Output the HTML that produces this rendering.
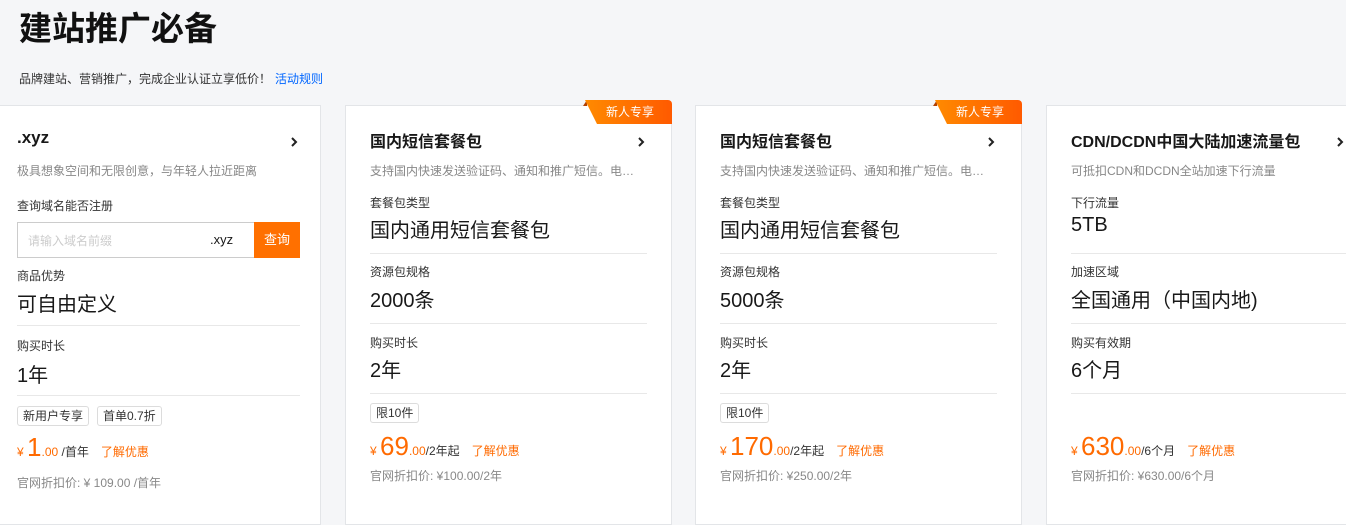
<!DOCTYPE html>
<html><head><meta charset="utf-8"><style>
*{margin:0;padding:0;box-sizing:border-box}
body{width:1346px;height:502px;overflow:hidden;background:#f5f6f8;font-family:"Liberation Sans","Noto Sans CJK SC",sans-serif;color:#181818;position:relative}
h1{position:absolute;left:19px;top:2px;font-size:33px;font-weight:700;color:#111}
.sub{position:absolute;left:19px;top:70px;font-size:12px;color:#333}
.sub a{color:#0066ff;text-decoration:none;margin-left:4px}
.card{position:absolute;top:105px;height:420px;background:#fff;border:1px solid #e3e5e8}
.in{position:absolute;left:24px;right:24px;top:0}
.t{position:absolute;top:22px;font-size:16px;font-weight:700;color:#181818}
.ar{position:absolute;right:2px;top:30px;width:8px;height:12px}
.d{position:absolute;top:56px;font-size:12px;color:#888;white-space:nowrap}
.lb{position:absolute;font-size:12px;color:#333}
.v{position:absolute;font-size:20px;color:#181818}
.hr{position:absolute;left:0;right:0;height:1px;background:#e8e8e8}
.tag{position:absolute;font-size:12px;border:1px solid #dcdcdc;border-radius:3px;padding:0 5px;height:20px;line-height:18px;color:#333}
.pr{position:absolute;color:#ff6a00;white-space:nowrap}
.pr .y{font-size:12px}.pr .n{font-size:26px}.pr .s{font-size:12px}.pr .u{font-size:12px;color:#333}.pr .k{font-size:12px;margin-left:12px}
.og{position:absolute;font-size:12px;color:#888}
.badge{position:absolute;top:-6px;right:-1px;width:87px;height:24px;background:linear-gradient(90deg,#ff8a00,#ff5a00);clip-path:polygon(0 0,100% 0,100% 100%,12px 100%);color:#fff;font-size:12px;line-height:24px;text-align:right;padding-right:18px;border-top-right-radius:4px}
.fold{position:absolute;top:-6px;right:84px;width:0;height:0;border-bottom:6px solid #b34000;border-left:4px solid transparent}
</style></head><body>
<h1>建站推广必备</h1>
<div class="sub">品牌建站、营销推广，完成企业认证立享低价！<a>活动规则</a></div>

<div class="card" style="left:-10px;width:331px">
<div class="in" style="left:26px;right:20px">
<div class="t" style="font-size:17px">.xyz</div><svg class="ar" viewBox="0 0 8 12"><path d="M2 2l4 4-4 4" stroke="#222" stroke-width="2" fill="none"/></svg>
<div class="d">极具想象空间和无限创意，与年轻人拉近距离</div>
<div class="lb" style="top:91px">查询域名能否注册</div>
<div style="position:absolute;top:116px;left:0;right:0;height:36px;border:1px solid #ccc"><span style="position:absolute;left:10px;top:9px;font-size:12px;color:#ccc">请输入域名前缀</span><span style="position:absolute;left:192px;top:9px;font-size:13px">.xyz</span><span style="position:absolute;right:-1px;top:-1px;width:46px;height:36px;background:#ff7000;color:#fff;font-size:13px;line-height:36px;text-align:center">查询</span></div>
<div class="lb" style="top:161px">商品优势</div>
<div class="v" style="top:182px">可自由定义</div>
<div class="hr" style="top:219px"></div>
<div class="lb" style="top:231px">购买时长</div>
<div class="v" style="top:253px">1年</div>
<div class="hr" style="top:289px"></div>
<div class="tag" style="top:300px;left:0">新用户专享</div><div class="tag" style="top:300px;left:80px">首单0.7折</div>
<div class="pr" style="top:326px"><span class="y">¥ </span><span class="n">1</span><span class="s">.00</span><span class="u"> /首年</span><span class="k">了解优惠</span></div>
<div class="og" style="top:368px">官网折扣价: ¥ 109.00 /首年</div>
</div></div>

<div class="card" style="left:345px;width:327px"><div class="fold"></div><div class="badge">新人专享</div>
<div class="in">
<div class="t">国内短信套餐包</div><svg class="ar" viewBox="0 0 8 12"><path d="M2 2l4 4-4 4" stroke="#222" stroke-width="2" fill="none"/></svg>
<div class="d">支持国内快速发送验证码、通知和推广短信。电…</div>
<div class="lb" style="top:88px">套餐包类型</div>
<div class="v" style="top:108px">国内通用短信套餐包</div>
<div class="hr" style="top:147px"></div>
<div class="lb" style="top:157px">资源包规格</div>
<div class="v" style="top:178px">2000条</div>
<div class="hr" style="top:217px"></div>
<div class="lb" style="top:228px">购买时长</div>
<div class="v" style="top:248px">2年</div>
<div class="hr" style="top:287px"></div>
<div class="tag" style="top:297px;left:0">限10件</div>
<div class="pr" style="top:325px"><span class="y">¥ </span><span class="n">69</span><span class="s">.00</span><span class="u">/2年起</span><span class="k">了解优惠</span></div>
<div class="og" style="top:361px">官网折扣价: ¥100.00/2年</div>
</div></div>

<div class="card" style="left:695px;width:327px"><div class="fold"></div><div class="badge">新人专享</div>
<div class="in">
<div class="t">国内短信套餐包</div><svg class="ar" viewBox="0 0 8 12"><path d="M2 2l4 4-4 4" stroke="#222" stroke-width="2" fill="none"/></svg>
<div class="d">支持国内快速发送验证码、通知和推广短信。电…</div>
<div class="lb" style="top:88px">套餐包类型</div>
<div class="v" style="top:108px">国内通用短信套餐包</div>
<div class="hr" style="top:147px"></div>
<div class="lb" style="top:157px">资源包规格</div>
<div class="v" style="top:178px">5000条</div>
<div class="hr" style="top:217px"></div>
<div class="lb" style="top:228px">购买时长</div>
<div class="v" style="top:248px">2年</div>
<div class="hr" style="top:287px"></div>
<div class="tag" style="top:297px;left:0">限10件</div>
<div class="pr" style="top:325px"><span class="y">¥ </span><span class="n">170</span><span class="s">.00</span><span class="u">/2年起</span><span class="k">了解优惠</span></div>
<div class="og" style="top:361px">官网折扣价: ¥250.00/2年</div>
</div></div>

<div class="card" style="left:1046px;width:327px">
<div class="in" style="right:51px">
<div class="t">CDN/DCDN中国大陆加速流量包</div><svg class="ar" viewBox="0 0 8 12" style="right:-23px"><path d="M2 2l4 4-4 4" stroke="#222" stroke-width="2" fill="none"/></svg>
<div class="d">可抵扣CDN和DCDN全站加速下行流量</div>
<div class="lb" style="top:88px">下行流量</div>
<div class="v" style="top:108px">5TB</div>
<div class="hr" style="top:147px;right:-51px"></div>
<div class="lb" style="top:157px">加速区域</div>
<div class="v" style="top:178px">全国通用（中国内地)</div>
<div class="hr" style="top:217px;right:-51px"></div>
<div class="lb" style="top:228px">购买有效期</div>
<div class="v" style="top:248px">6个月</div>
<div class="hr" style="top:287px;right:-51px"></div>
<div class="pr" style="top:325px"><span class="y">¥ </span><span class="n">630</span><span class="s">.00</span><span class="u">/6个月</span><span class="k">了解优惠</span></div>
<div class="og" style="top:361px">官网折扣价: ¥630.00/6个月</div>
</div></div>
</body></html>
